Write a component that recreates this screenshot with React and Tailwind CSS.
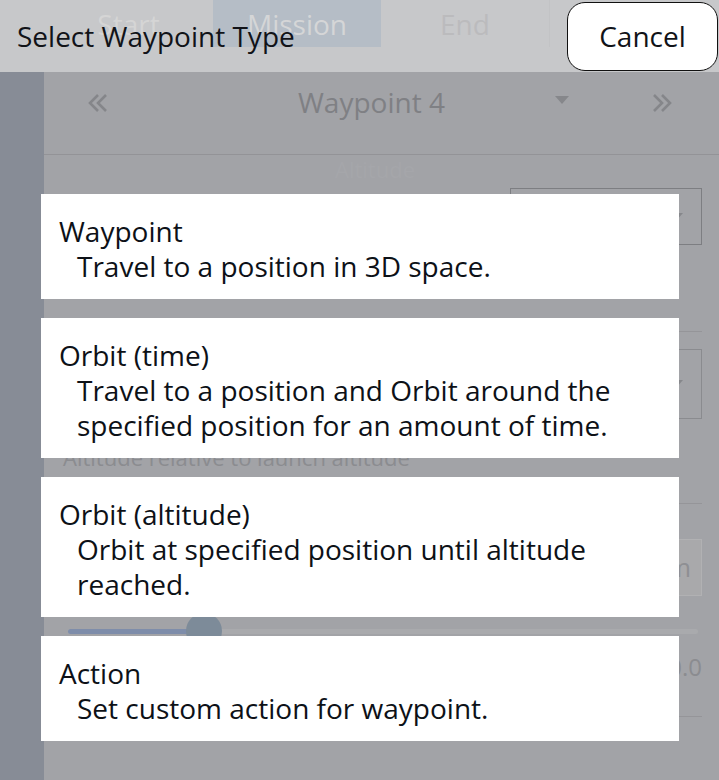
import React from 'react'

const types = [
  { title: 'Waypoint', desc: 'Travel to a position in 3D space.' },
  { title: 'Orbit (time)', desc: 'Travel to a position and Orbit around the specified position for an amount of time.' },
  { title: 'Orbit (altitude)', desc: 'Orbit at specified position until altitude reached.' },
  { title: 'Action', desc: 'Set custom action for waypoint.' },
]

function Chevrons({ dir }) {
  const d = dir === 'left'
    ? 'M10 2 L2 10 L10 18 M18 2 L10 10 L18 18'
    : 'M2 2 L10 10 L2 18 M10 2 L18 10 L10 18'
  return (
    <svg width="22" height="20" viewBox="0 0 20 20" fill="none" stroke="#85868a" strokeWidth="2.6">
      <path d={d} />
    </svg>
  )
}

function Caret() {
  return (
    <svg width="14" height="8" viewBox="0 0 14 8">
      <path d="M0 0 L14 0 L7 8 Z" fill="#86878b" />
    </svg>
  )
}

function Background() {
  return (
    <div className="flex flex-col w-full h-full">
      <div className="h-[72px] flex items-start pl-[44px] bg-[#a2a3a7]">
        <div className="w-[169px] h-[47px] flex items-center justify-center text-[28px] text-[#b9b9b9]">Start</div>
        <div className="w-[168px] h-[47px] flex items-center justify-center text-[28px] text-[#b9bbbd] bg-[#8491a0]">Mission</div>
        <div className="w-[169px] h-[47px] flex items-center justify-center text-[28px] text-[#8e8e92] border-r border-[#9a9b9f]">End</div>
      </div>
      <div className="flex flex-1">
        <div className="w-[44px] bg-[#878c96]" />
        <div className="flex-1 flex flex-col pl-[19px] pr-[17px]">
          <div className="h-[83px] flex items-center border-b border-[#939397] -ml-[19px] -mr-[17px]">
            <div className="ml-[43px] mt-[-20px]"><Chevrons dir="left" /></div>
            <div className="ml-[189px] text-[28px] leading-[35px] text-[#7f8084] mt-[-22px]">Waypoint 4</div>
            <div className="ml-[110px] mt-[-26px]"><Caret /></div>
            <div className="ml-[82px] mt-[-20px]"><Chevrons dir="right" /></div>
          </div>
          <div className="h-[177px] flex flex-col border-b border-[#959599]">
            <div className="h-[35px] mt-[-2px] text-[22px] text-[#a5a6aa] pl-[272px]">Altitude</div>
            <div className="self-end w-[192px] h-[57px] border border-[#7d7e82] flex items-center justify-end pr-[18px]">
              <Caret />
            </div>
          </div>
          <div className="h-[172px] flex flex-col border-b border-[#959599]">
            <div className="self-end mt-[17px] w-[193px] h-[70px] border border-[#8a8b8f] flex items-center justify-end pr-[18px]">
              <Caret />
            </div>
            <div className="mt-[22px] text-[22px] text-[#8b8c90]">Altitude relative to launch altitude</div>
          </div>
          <div className="h-[213px] flex flex-col border-b border-[#959599]">
            <div className="self-end mt-[35px] w-[70px] h-[57px] bg-[#a9a9ab] border border-[#b1b1b3] flex items-center justify-end pr-[10px] text-[26px] text-[#8e8f93]">m</div>
            <div className="relative mt-[33px] ml-[5px] mr-[4px] h-[5px] rounded-full bg-[#a9aaad]">
              <div className="h-full w-[122px] rounded-full bg-[#7e8daa]" />
              <div className="absolute left-[118px] top-[-16px] w-[36px] h-[36px] rounded-full bg-[#7d8b99]" />
            </div>
            <div className="self-end mt-[18px] text-[24px] leading-[30px] text-[#8b8c90]">100.0</div>
          </div>
        </div>
      </div>
    </div>
  )
}

export default function App() {
  return (
    <div
      className="relative w-[719px] h-[780px] overflow-hidden bg-[#a2a3a7]"
      style={{ fontFamily: '"Open Sans", "Liberation Sans", sans-serif' }}
    >
      <Background />
      <div className="absolute inset-0 flex flex-col">
        <div className="h-[72px] flex items-center justify-between bg-white/40 pl-[17px] pr-[1px]">
          <div className="text-[28px] leading-[35px] text-[#111318]">Select Waypoint Type</div>
          <button className="w-[151px] h-[69px] bg-white border border-[#111] rounded-[18px] text-[28px] leading-[35px] text-[#111318]">
            Cancel
          </button>
        </div>
        <div className="flex flex-col gap-[19px] pt-[122px] pl-[41px]">
          {types.map((t) => (
            <div key={t.title} className="w-[638px] bg-white pt-[20px] pb-[15px] pl-[18px] pr-[18px] text-[28px] leading-[35px] text-[#0d1117]">
              <div>{t.title}</div>
              <div className="pl-[18px]">{t.desc}</div>
            </div>
          ))}
        </div>
      </div>
    </div>
  )
}
